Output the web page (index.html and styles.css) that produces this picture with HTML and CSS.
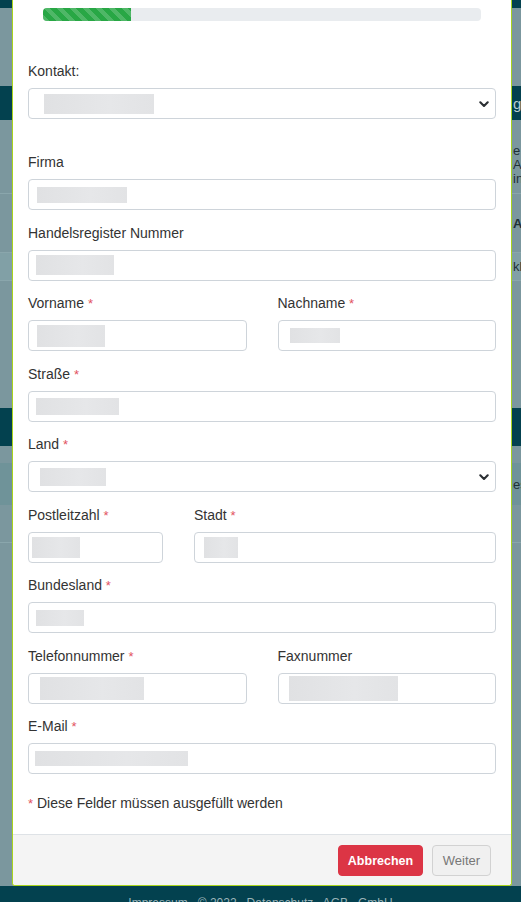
FILE: index.html
```html
<!DOCTYPE html>
<html lang="de">
<head>
<meta charset="utf-8">
<title>Kontakt</title>
<link rel="stylesheet" href="styles.css">
</head>
<body>
<div class="page">
  <div class="band dark h-top"></div>
  <div class="band gray h-a"></div>
  <div class="band dark h-b"><span class="frag light">g</span></div>
  <div class="band gray tbl">
    <div class="trow r1"></div>
    <div class="trow r2"><span class="frag">e ·</span><span class="frag">AU</span><span class="frag">in</span></div>
    <div class="trow r3"><span class="frag bold">An</span></div>
    <div class="trow r4"><span class="frag">kl</span></div>
    <div class="trow r5"></div>
  </div>
  <div class="band dark h-c"></div>
  <div class="band gray h-d"></div>
  <div class="band stripe h-e"><span class="frag">es</span></div>
  <div class="band gray h-f"></div>
  <div class="band gray h-g"></div>
  <div class="band dark foot"><span class="foot-text">Impressum &nbsp; © 2022 &nbsp; Datenschutz &nbsp; AGB &nbsp; GmbH</span></div>
</div>

<div class="modal">
  <div class="modal-body">
    <div class="progress"><div class="progress-bar" style="width:20%"></div></div>

    <div class="group kontakt">
      <label>Kontakt:</label>
      <div class="control select">
        <span class="blur" style="width:110px;height:20px;margin-left:15px"></span>
        <svg class="chev" width="10" height="7" viewBox="0 0 10 7"><polyline points="1.3,1.3 5,5 8.7,1.3" fill="none" stroke="#2b2f33" stroke-width="2.1" stroke-linecap="round" stroke-linejoin="round"/></svg>
      </div>
    </div>

    <div class="group">
      <label>Firma</label>
      <div class="control"><span class="blur" style="width:90px;height:16px;margin-left:8px"></span></div>
    </div>

    <div class="group">
      <label>Handelsregister Nummer</label>
      <div class="control"><span class="blur" style="width:78px;height:20px;margin-left:7px"></span></div>
    </div>

    <div class="row half">
      <div class="group">
        <label>Vorname <span class="req">*</span></label>
        <div class="control"><span class="blur" style="width:68px;height:22px;margin-left:8px"></span></div>
      </div>
      <div class="group">
        <label>Nachname <span class="req">*</span></label>
        <div class="control"><span class="blur" style="width:50px;height:15px;margin-left:11px"></span></div>
      </div>
    </div>

    <div class="group">
      <label>Straße <span class="req">*</span></label>
      <div class="control"><span class="blur" style="width:83px;height:17px;margin-left:7px"></span></div>
    </div>

    <div class="group">
      <label>Land <span class="req">*</span></label>
      <div class="control select">
        <span class="blur" style="width:66px;height:18px;margin-left:11px"></span>
        <svg class="chev" width="10" height="7" viewBox="0 0 10 7"><polyline points="1.3,1.3 5,5 8.7,1.3" fill="none" stroke="#2b2f33" stroke-width="2.1" stroke-linecap="round" stroke-linejoin="round"/></svg>
      </div>
    </div>

    <div class="row third">
      <div class="group">
        <label>Postleitzahl <span class="req">*</span></label>
        <div class="control"><span class="blur" style="width:48px;height:21px;margin-left:3px"></span></div>
      </div>
      <div class="group">
        <label>Stadt <span class="req">*</span></label>
        <div class="control"><span class="blur" style="width:34px;height:21px;margin-left:9px"></span></div>
      </div>
    </div>

    <div class="group">
      <label>Bundesland <span class="req">*</span></label>
      <div class="control"><span class="blur" style="width:48px;height:16px;margin-left:7px"></span></div>
    </div>

    <div class="row half">
      <div class="group">
        <label>Telefonnummer <span class="req">*</span></label>
        <div class="control"><span class="blur" style="width:104px;height:23px;margin-left:11px"></span></div>
      </div>
      <div class="group">
        <label>Faxnummer</label>
        <div class="control"><span class="blur" style="width:109px;height:25px;margin-left:10px"></span></div>
      </div>
    </div>

    <div class="group">
      <label>E-Mail <span class="req">*</span></label>
      <div class="control"><span class="blur" style="width:153px;height:15px;margin-left:6px"></span></div>
    </div>

    <p class="note"><span class="req">*</span> Diese Felder müssen ausgefüllt werden</p>
  </div>
  <div class="modal-footer">
    <button class="btn btn-danger" type="button">Abbrechen</button>
    <button class="btn btn-light" type="button">Weiter</button>
  </div>
</div>
</body>
</html>
```

FILE: styles.css
```css
html, body {
  margin: 0;
  padding: 0;
}
body {
  width: 521px;
  height: 902px;
  overflow: hidden;
  position: relative;
  font-family: "Liberation Sans", Arial, sans-serif;
  font-size: 14px;
  color: #333;
  background: #7b979e;
}

/* page behind the overlay */
.page {
  display: flex;
  flex-direction: column;
}
.band {
  display: flex;
  align-items: center;
  justify-content: flex-end;
  overflow: hidden;
  flex-shrink: 0;
}
.dark { background: #03414f; }
.gray { background: #7b979e; }
.stripe { background: #6f9399; }
.h-top { height: 8px; }
.h-a { height: 78px; }
.h-b { height: 34px; }
.tbl {
  height: 288px;
  flex-direction: column;
  align-items: stretch;
  justify-content: flex-start;
}
.trow {
  display: flex;
  flex-direction: column;
  align-items: flex-end;
  border-bottom: 1px solid #8aa6ac;
  flex-shrink: 0;
}
.r1 { height: 17px; border-bottom: none; }
.r2 { height: 56px; justify-content: center; line-height: 14px; }
.r3 { height: 58px; justify-content: center; }
.r4 { height: 27px; justify-content: center; background: #81a0a6; }
.r5 { height: 127px; }
.h-c { height: 38px; }
.h-d { height: 17px; }
.h-e { height: 42px; }
.h-f { height: 37px; border-bottom: 1px solid #8aa6ac; }
.h-g { height: 343px; }
.foot {
  height: 16px;
  align-items: flex-start;
  justify-content: center;
}
.frag {
  width: 8px;
  font-size: 13px;
  color: #1f3136;
  white-space: nowrap;
  overflow: hidden;
}
.frag.light { color: #b9cdd1; font-size: 15px; }
.frag.bold { font-weight: bold; }
.foot-text {
  margin-top: 10px;
  font-size: 12px;
  line-height: 14px;
  color: #9bb4b9;
  white-space: nowrap;
}

/* modal */
.modal {
  position: absolute;
  left: 12px;
  top: 0;
  width: 500px;
  box-sizing: border-box;
  background: #fff;
  border: 1px solid #a9d41d;
  border-top: none;
  border-radius: 0 0 3px 3px;
}
.modal-body {
  padding: 8px 15px 21px;
}
.progress {
  margin: 0 15px;
  height: 13px;
  background: #e9ecef;
  border-radius: 4px;
  overflow: hidden;
  display: flex;
}
.progress-bar {
  background-color: #28a745;
  background-image: linear-gradient(45deg, rgba(255,255,255,.18) 25%, transparent 25%, transparent 50%, rgba(255,255,255,.18) 50%, rgba(255,255,255,.18) 75%, transparent 75%, transparent);
  background-size: 13px 13px;
}

.group {
  margin-bottom: 12.5px;
}
.group.kontakt {
  margin-top: 40px;
  margin-bottom: 33px;
}
label {
  display: block;
  height: 20px;
  line-height: 20px;
  margin-bottom: 7px;
  color: #333;
  overflow: visible;
}
.req {
  color: #e2525f;
  font-size: 13px;
  line-height: 0;
}
.control {
  height: 31px;
  box-sizing: border-box;
  border: 1px solid #ced4da;
  border-radius: 4px;
  background: #fff;
  display: flex;
  align-items: center;
}
.control.select {
  justify-content: space-between;
  padding-right: 6px;
}
.chev {
  display: block;
  margin-top: 1px;
}
.blur {
  display: block;
  background: linear-gradient(90deg, #e0e1e3, #e6e7e9 60%, #e2e3e5);
}

.row {
  display: grid;
  column-gap: 31px;
}
.row.half { grid-template-columns: 1fr 1fr; }
.row.third { grid-template-columns: 135px 1fr; }

.note {
  margin: 19px 0 0;
  height: 20px;
  line-height: 20px;
  font-size: 14px;
  color: #333;
}

.modal-footer {
  border-top: 1px solid #dee2e6;
  background: #f4f4f4;
  padding: 10px 20px 9px;
  display: flex;
  justify-content: flex-end;
  gap: 9px;
  border-radius: 0 0 3px 3px;
}
.btn {
  height: 31px;
  box-sizing: border-box;
  font-family: "Liberation Sans", Arial, sans-serif;
  border-radius: 4px;
  padding: 0;
  cursor: pointer;
}
.btn-danger {
  width: 85px;
  background: #dc3545;
  border: 1px solid #dc3545;
  color: #fff;
  font-weight: bold;
  font-size: 12.5px;
}
.btn-light {
  width: 59px;
  background: #f0f0f0;
  border: 1px solid #d2d2d2;
  color: #777;
  font-size: 13px;
}
```
